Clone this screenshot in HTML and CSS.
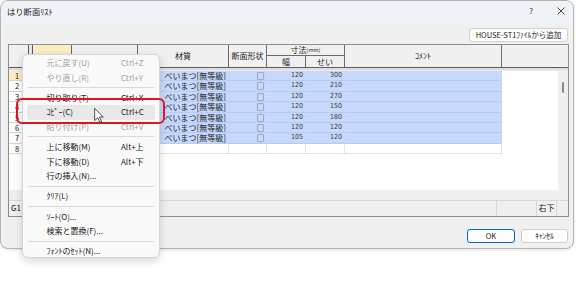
FILE: index.html
```html
<!DOCTYPE html>
<html lang="ja">
<head>
<meta charset="utf-8">
<title>はり断面ﾘｽﾄ</title>
<link rel="stylesheet" href="styles.css">
</head>
<body>
<div class="window">
  <div class="titlebar">
    <span class="title">はり断面ﾘｽﾄ</span>
    <div class="caption-btns">
      <span class="cap-help">?</span>
      <svg class="cap-close" width="8" height="8" viewBox="0 0 8 8"><path d="M0.5 0.5 L7.5 7.5 M7.5 0.5 L0.5 7.5" stroke="#333" stroke-width="0.9" fill="none"/></svg>
    </div>
  </div>
  <div class="content">
    <div class="toolbar"><button class="btn btn-add">HOUSE-ST1ﾌｧｲﾙから追加</button></div>
    <div class="grid">
      <div class="ghead">
        <div class="hc hc-rn"></div>
        <div class="hc hc-sep"></div>
        <div class="hc hc-a"></div>
        <div class="hc hc-b"></div>
        <div class="hc hc-mat">材質</div>
        <div class="hc hc-shp">断面形状</div>
        <div class="hc hc-dim">寸法<small>(mm)</small></div>
        <div class="hc hc-w">幅</div>
        <div class="hc hc-h">せい</div>
        <div class="hc hc-cm">ｺﾒﾝﾄ</div>
        <div class="hc hc-fill"></div>
      </div>
      <div class="gband"></div>
      <div class="gbody">
        <div class="rows">
          <div class="row sel cur"><div class="c rn">1</div><div class="c sp"></div><div class="c"></div><div class="c"></div><div class="c">べいまつ[無等級]</div><div class="c shp">□</div><div class="c num">120</div><div class="c num">300</div><div class="c"></div><div class="c fill"></div></div>
          <div class="row sel"><div class="c rn">2</div><div class="c sp"></div><div class="c"></div><div class="c"></div><div class="c">べいまつ[無等級]</div><div class="c shp">□</div><div class="c num">120</div><div class="c num">210</div><div class="c"></div><div class="c fill"></div></div>
          <div class="row sel"><div class="c rn">3</div><div class="c sp"></div><div class="c"></div><div class="c"></div><div class="c">べいまつ[無等級]</div><div class="c shp">□</div><div class="c num">120</div><div class="c num">270</div><div class="c"></div><div class="c fill"></div></div>
          <div class="row sel"><div class="c rn">4</div><div class="c sp"></div><div class="c"></div><div class="c"></div><div class="c">べいまつ[無等級]</div><div class="c shp">□</div><div class="c num">120</div><div class="c num">150</div><div class="c"></div><div class="c fill"></div></div>
          <div class="row sel"><div class="c rn">5</div><div class="c sp"></div><div class="c"></div><div class="c"></div><div class="c">べいまつ[無等級]</div><div class="c shp">□</div><div class="c num">120</div><div class="c num">180</div><div class="c"></div><div class="c fill"></div></div>
          <div class="row sel"><div class="c rn">6</div><div class="c sp"></div><div class="c"></div><div class="c"></div><div class="c">べいまつ[無等級]</div><div class="c shp">□</div><div class="c num">120</div><div class="c num">120</div><div class="c"></div><div class="c fill"></div></div>
          <div class="row sel"><div class="c rn">7</div><div class="c sp"></div><div class="c"></div><div class="c"></div><div class="c">べいまつ[無等級]</div><div class="c shp">□</div><div class="c num">105</div><div class="c num">120</div><div class="c"></div><div class="c fill"></div></div>
          <div class="row"><div class="c rn">8</div><div class="c sp"></div><div class="c"></div><div class="c"></div><div class="c"></div><div class="c"></div><div class="c"></div><div class="c"></div><div class="c"></div><div class="c fill"></div></div>
        </div>
        <div class="vscroll"><div class="thumb"></div></div>
      </div>
      <div class="hscroll"></div>
      <div class="status">
        <div class="st st-main">G1</div>
        <div class="st st-a"></div>
        <div class="st st-b">右下</div>
        <div class="st st-c"></div>
      </div>
    </div>
    <div class="footer">
      <button class="btn btn-ok">OK</button>
      <button class="btn btn-cancel">ｷｬﾝｾﾙ</button>
    </div>
  </div>
</div>

<div class="menu">
  <div class="mi dis"><span>元に戻す(U)</span><span>Ctrl+Z</span></div>
  <div class="mi dis"><span>やり直し(R)</span><span>Ctrl+Y</span></div>
  <div class="msep"></div>
  <div class="mi"><span>切り取り(T)</span><span>Ctrl+X</span></div>
  <div class="mi hov"><span>ｺﾋﾟｰ(C)</span><span>Ctrl+C</span></div>
  <div class="mi dis"><span>貼り付け(P)</span><span>Ctrl+V</span></div>
  <div class="msep"></div>
  <div class="mi"><span>上に移動(M)</span><span>Alt+上</span></div>
  <div class="mi"><span>下に移動(D)</span><span>Alt+下</span></div>
  <div class="mi"><span>行の挿入(N)...</span></div>
  <div class="msep"></div>
  <div class="mi"><span>ｸﾘｱ(L)</span></div>
  <div class="msep"></div>
  <div class="mi"><span>ｿｰﾄ(O)...</span></div>
  <div class="mi"><span>検索と置換(F)...</span></div>
  <div class="msep"></div>
  <div class="mi"><span>ﾌｫﾝﾄのｾｯﾄ(N)...</span></div>
</div>

<div class="callout"></div>

<svg class="cursor" width="10" height="15" viewBox="0 0 12 19">
  <path d="M0.5 0.5 L0.5 16 L4.3 12.3 L7 18.2 L9.3 17.2 L6.6 11.4 L11.5 11.4 Z" fill="#fff" stroke="#222" stroke-width="1" stroke-linejoin="round"/>
</svg>
</body>
</html>
```

FILE: styles.css
```css
* {
  box-sizing: border-box;
  margin: 0;
  padding: 0;
}

html,
body {
  width: 576px;
  height: 293px;
  background: #ffffff;
  overflow: hidden;
}

body {
  position: relative;
  font-family: "Noto Sans CJK JP", "Noto Sans", sans-serif;
  font-size: 8px;
  color: #1b1b1b;
}

/* ---------- window ---------- */
.window {
  width: 574px;
  height: 249px;
  border: 1px solid #b4b4b4;
  border-radius: 8px;
  background: #f0f0f0;
  overflow: hidden;
  display: flex;
  flex-direction: column;
  box-shadow: 0 1px 3px rgba(0, 0, 0, 0.12);
}

.titlebar {
  height: 23px;
  flex: none;
  display: flex;
  justify-content: space-between;
  align-items: flex-start;
  padding: 3px 0 0 6px;
  background: #eff2f7;
}

.title {
  line-height: 14px;
  font-size: 8.3px;
  color: #1a1a1a;
}

.caption-btns {
  display: flex;
  align-items: center;
  height: 14px;
  padding-right: 8px;
  gap: 24px;
}

.cap-help {
  font-size: 8px;
  line-height: 14px;
  color: #333;
}

.cap-close {
  display: block;
}

.content {
  flex: 1;
  display: flex;
  flex-direction: column;
  padding: 0 5px 0 7px;
}

/* ---------- buttons ---------- */
.btn {
  font-family: "Noto Sans CJK JP", "Noto Sans", sans-serif;
  font-size: 7.5px;
  color: #1b1b1b;
  height: 14px;
  line-height: 12px;
  background: #fdfdfd;
  border: 1px solid #d0d0d0;
  border-radius: 3px;
  padding: 0;
}

.toolbar {
  display: flex;
  justify-content: flex-end;
  padding-top: 4px;
  height: 18px;
  flex: none;
}

.btn-add {
  width: 99px;
}

/* ---------- grid ---------- */
.grid {
  margin-top: 2px;
  width: 561px;
  height: 173px;
  flex: none;
  border: 1px solid #8e8e8e;
  background: #ffffff;
  display: flex;
  flex-direction: column;
}

.ghead {
  height: 23px;
  flex: none;
  display: grid;
  grid-template-columns: 20px 4px 39px 66px 91px 38px 39px 39px 157px 1fr;
  grid-template-rows: 11px 11px;
  border-bottom: 1px solid #5e5e5e;
  background: #f0f0f0;
}

.hc {
  grid-row: 1 / 3;
  border-right: 1px solid #6a6a6a;
  display: flex;
  align-items: center;
  justify-content: center;
  font-size: 8px;
  line-height: 10px;
  color: #1b1b1b;
  white-space: nowrap;
  overflow: hidden;
}

.hc-rn {
  border-right: 1px solid #5a5a5a;
}

.hc-sep {
  border-right: 1px solid #5a5a5a;
  background: #e8e8e8;
}

.hc-a {
  background: #fbedc0;
  margin-left: 2px;
}

.hc-dim {
  grid-row: 1;
  grid-column: 7 / 9;
  border-bottom: 1px solid #6a6a6a;
}

.hc-dim small {
  font-size: 5.5px;
}

.hc-w {
  grid-row: 2;
  grid-column: 7;
}

.hc-h {
  grid-row: 2;
  grid-column: 8;
}

.hc-fill {
  border-right: none;
}

.gband {
  height: 3px;
  flex: none;
  background: #dedede;
  border-bottom: 1px solid #ececec;
}

.gbody {
  height: 119px;
  flex: none;
  display: flex;
}

.rows {
  width: 549px;
  display: flex;
  flex-direction: column;
}

.row {
  height: 10.375px;
  display: grid;
  grid-template-columns: 20px 4px 39px 66px 91px 38px 39px 39px 157px 56px;
}

.c {
  border-right: 1px solid #e4e4e4;
  border-bottom: 1px solid #e4e4e4;
  font-size: 8px;
  line-height: 9.4px;
  text-align: right;
  padding-right: 2px;
  white-space: nowrap;
  overflow: hidden;
  color: #1b1b1b;
}

.c.rn {
  text-align: center;
  padding-right: 3px;
  background: #ffffff;
  border-color: #d4d4d4;
  font-size: 7.5px;
}

.row.cur .c.rn {
  background: #fbedc0;
}

.c.sp {
  background: #f4f4f4;
}

.c.fill {
  border-right: none;
  border-bottom: none;
}

.row.sel .c:not(.rn):not(.sp):not(.fill) {
  background: #c6d8fb;
  border-right-color: #c6d8fb;
  border-bottom-color: #b6cbf1;
}

.c.shp {
  padding-right: 1.5px;
  font-size: 8px;
  color: #222;
}

.c.num {
  font-family: "DejaVu Sans", sans-serif;
  font-stretch: condensed;
  font-size: 7px;
  color: #3a3a3a;
  padding-right: 2px;
}

.vscroll {
  width: 10px;
  background: #efefef;
  position: relative;
}

.thumb {
  position: absolute;
  left: 4px;
  top: 11px;
  width: 2px;
  height: 11px;
  border-radius: 1px;
  background: #8a8a8a;
}

.hscroll {
  height: 10px;
  flex: none;
  background: #efefef;
}

.status {
  height: 16px;
  flex: none;
  display: flex;
  border-top: 1px solid #d8d8d8;
  background: #efefef;
}

.st {
  line-height: 14px;
  font-size: 8px;
  border-right: 1px solid #d8d8d8;
}

.st-main {
  width: 488px;
  padding-left: 2px;
}

.st-a {
  width: 40px;
}

.st-b {
  width: 20px;
  text-align: center;
}

.st-c {
  flex: 1;
  border-right: none;
}

/* ---------- footer ---------- */
.footer {
  display: flex;
  justify-content: flex-end;
  gap: 6px;
  padding-top: 12px;
}

.btn-ok {
  width: 48px;
  border-color: #0067c0;
}

.btn-cancel {
  width: 47px;
}

/* ---------- context menu ---------- */
.menu {
  position: absolute;
  left: 22px;
  top: 54px;
  width: 138px;
  height: 204px;
  padding-top: 1px;
  background: #f9f9f9;
  border: 1px solid #d6d6d6;
  border-radius: 6px;
  box-shadow: 0 3px 8px rgba(0, 0, 0, 0.16);
}

.mi {
  height: 14.4px;
  margin: 0 4px;
  padding-left: 19.5px;
  display: grid;
  grid-template-columns: 74.5px 1fr;
  align-items: center;
  font-size: 8px;
  line-height: 10px;
  color: #1a1a1a;
  border-radius: 3px;
  white-space: nowrap;
}

.mi.dis {
  color: #a2a2a2;
}

.mi.hov {
  background: #e8e8e8;
}

.msep {
  height: 6px;
  margin: 0 5px 0 5px;
  position: relative;
}

.msep::after {
  content: "";
  position: absolute;
  left: 0;
  right: 0;
  top: 2.5px;
  height: 1px;
  background: #dadada;
}

/* ---------- annotation overlays ---------- */
.callout {
  position: absolute;
  left: 16px;
  top: 98px;
  width: 149px;
  height: 26px;
  border: 2px solid #e0161f;
  border-radius: 6px;
}

.cursor {
  position: absolute;
  left: 94px;
  top: 108px;
}
```
